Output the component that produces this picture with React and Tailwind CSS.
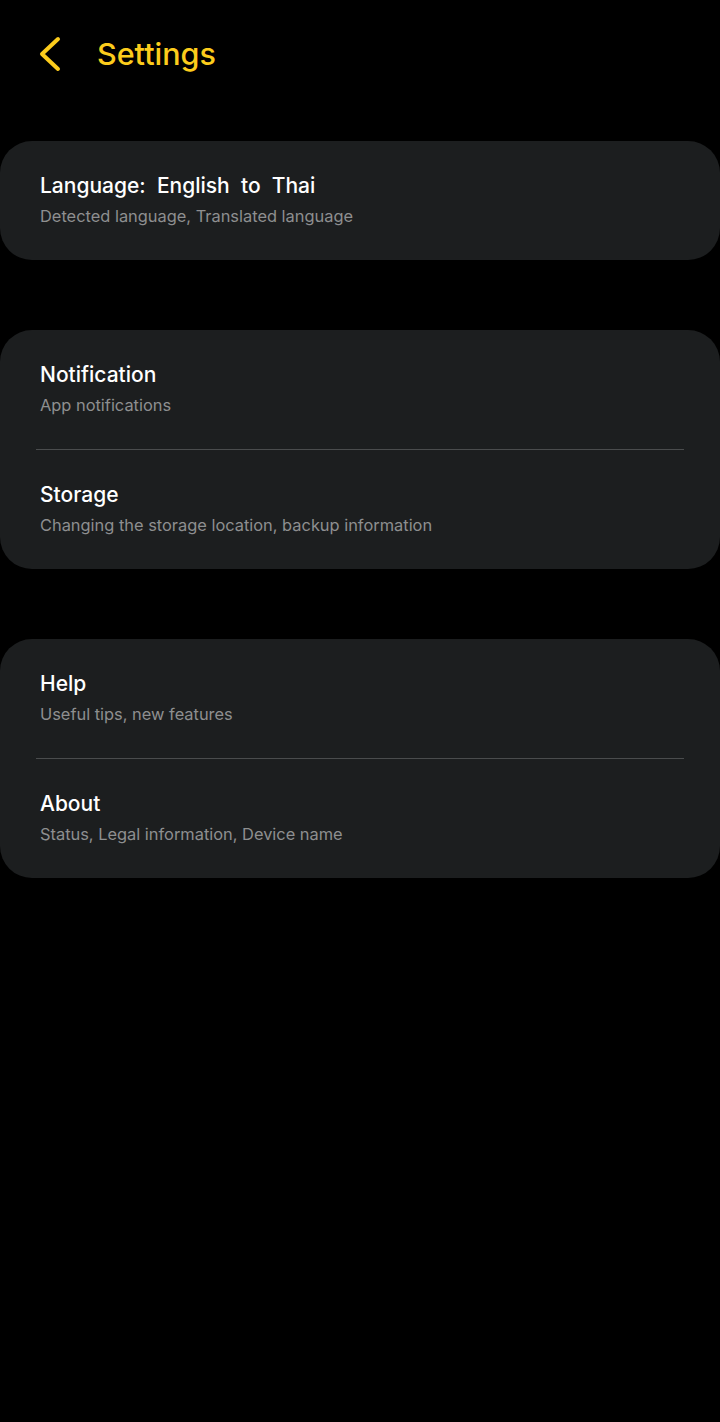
import React from 'react';

const groups = [
  [{ title: 'Language:  English  to  Thai', sub: 'Detected language, Translated language' }],
  [
    { title: 'Notification', sub: 'App notifications' },
    { title: 'Storage', sub: 'Changing the storage location, backup information' },
  ],
  [
    { title: 'Help', sub: 'Useful tips, new features' },
    { title: 'About', sub: 'Status, Legal information, Device name' },
  ],
];

const Row = ({ title, sub }) => (
  <div className="px-10 pt-[31px] pb-[33px]">
    <div className="text-[21px] leading-[28px] font-medium text-white whitespace-pre">{title}</div>
    <div className="mt-[5px] text-[16.4px] leading-[22px] text-[#8e8f90]">{sub}</div>
  </div>
);

export default function App() {
  return (
    <div
      className="w-[720px] min-h-[1422px] bg-black"
      style={{ fontFamily: 'Inter, "Noto Sans", sans-serif' }}
    >
      <div className="flex items-center h-[108px] pl-[36px]">
        <svg width="26" height="38" viewBox="0 0 26 38" fill="none">
          <polyline
            points="22,4 6,19 22,34"
            stroke="#fccc1c"
            strokeWidth="4"
            strokeLinecap="round"
            strokeLinejoin="round"
          />
        </svg>
        <span className="ml-[35px] text-[30.5px] text-[#fccc1c] font-medium">Settings</span>
      </div>

      <div className="mt-[33px] flex flex-col gap-[70px]">
        {groups.map((rows, gi) => (
          <div key={gi} className="bg-[#1c1e1f] rounded-[32px]">
            {rows.map((r, i) => (
              <div key={i}>
                {i > 0 && <div className="mx-9 h-px bg-[#4a4c4d]" />}
                <Row {...r} />
              </div>
            ))}
          </div>
        ))}
      </div>
    </div>
  );
}
